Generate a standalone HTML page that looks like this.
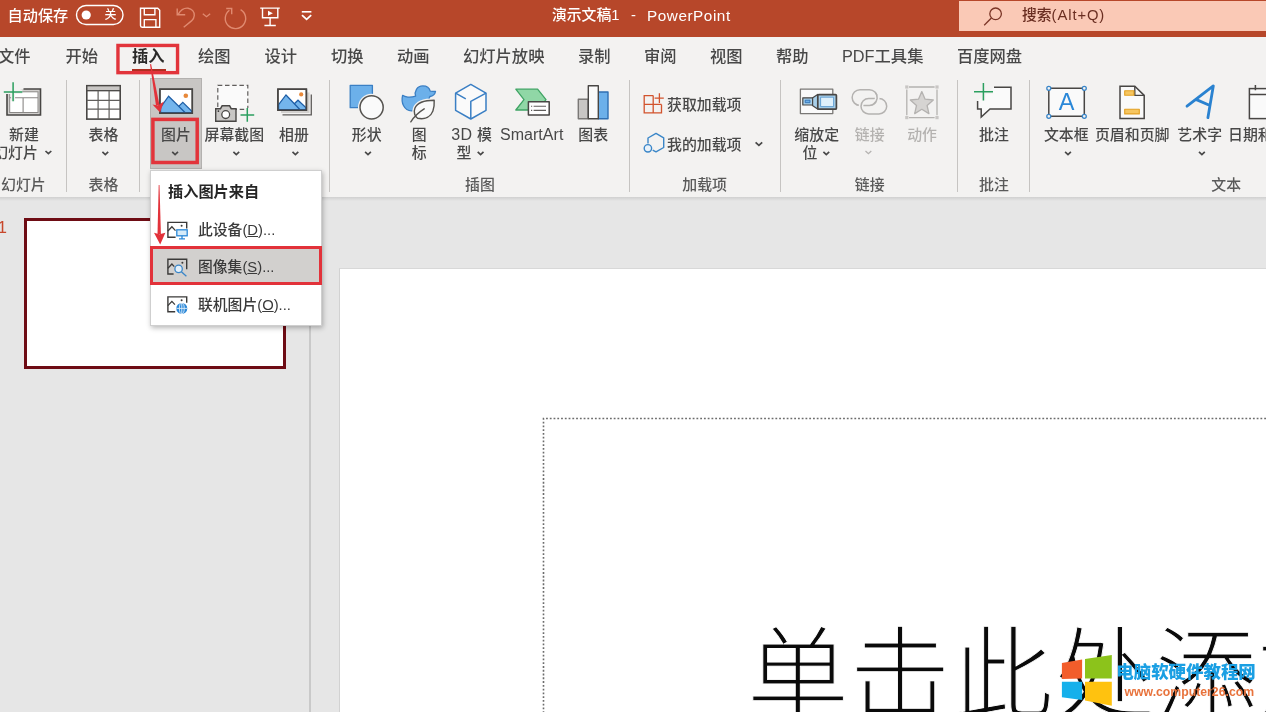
<!DOCTYPE html>
<html lang="zh-CN">
<head>
<meta charset="utf-8">
<title>演示文稿1 - PowerPoint</title>
<style>
*{box-sizing:border-box;margin:0;padding:0}
html,body{width:1266px;height:712px;overflow:hidden;background:#e6e6e6}
body{font-family:"Liberation Sans","Noto Sans CJK SC",sans-serif;color:#444;position:relative;font-size:14.8px;filter:blur(.6px)}
svg{position:absolute;left:0;top:0;overflow:visible}
#title{z-index:2;position:absolute;left:0;top:0;width:1266px;height:36.7px;background:#b7472a;color:#fff}
#title .t{position:absolute;top:5.4px;font-size:14.8px;font-weight:500;line-height:21px;white-space:nowrap}
#search{position:absolute;left:958.5px;top:1px;width:308px;height:30.2px;background:#fac9b6}
#search span{font-weight:500;position:absolute;left:63.5px;top:4.3px;font-size:14.8px;line-height:21px;color:#6a2e21;white-space:nowrap}
#tabs{position:absolute;left:0;top:36px;width:1266px;height:40px;background:#f3f2f1}
#tabs span{position:absolute;top:7.6px;font-size:16.3px;font-weight:500;line-height:24px;color:#484848;white-space:nowrap}
#ribbon{position:absolute;left:0;top:76px;width:1266px;height:121px;background:#f3f2f1}
.sep{position:absolute;top:80.3px;width:1.4px;height:111.5px;background:#c6c4c2}
.lb{position:absolute;transform:translateX(-50%);font-size:14.9px;font-weight:500;line-height:18px;color:#484848;white-space:nowrap;text-align:center}
.ll{position:absolute;font-size:14.9px;font-weight:500;line-height:18px;color:#484848;white-space:nowrap}
.g{color:#5a5a5a}
.dis{color:#b4b2b0}
#pressed{position:absolute;left:150px;top:78px;width:52px;height:91px;background:#c8c6c4;border:1px solid #b3b1af}
#shadow{position:absolute;left:0;top:197px;width:1266px;height:4px;background:linear-gradient(#d0d0d0,#e6e6e6)}
#splitl{position:absolute;left:309px;top:200px;width:1.5px;height:512px;background:#c9c9c9}
#slide{position:absolute;left:338.5px;top:268px;width:927px;height:444px;background:#fff;border-left:1px solid #d2d2d2;border-top:1px solid #d8d8d8}
#num{position:absolute;left:-2.5px;top:217.5px;font-size:17px;line-height:20px;color:#c8472b}
#thumb{position:absolute;left:24px;top:218px;width:261.5px;height:151px;background:#fff;border:3.8px solid #6e0c14}
#big{position:absolute;left:747px;top:607.3px;font-size:102px;line-height:140px;font-weight:300;color:#0a0a0a;white-space:nowrap;-webkit-text-stroke:.9px #fff}
#menu{position:absolute;left:150px;top:170px;width:172px;height:155.5px;background:#fff;border:1px solid #cfcfcf;box-shadow:1px 2px 5px rgba(0,0,0,.28)}
#menu .h{position:absolute;left:17px;top:11px;font-size:15.2px;font-weight:700;color:#262626;white-space:nowrap;line-height:20px}
#menu .i{position:absolute;left:47px;font-size:14.8px;font-weight:500;color:#3a3a3a;white-space:nowrap;line-height:20px}
#hl{position:absolute;left:150px;top:246px;width:172px;height:39px;background:#d2d0ce;border:3.5px solid #e2323a}
.wm1{position:absolute;left:1116.3px;top:659px;font-size:17.45px;line-height:26px;font-weight:900;color:#1a9fe3;white-space:nowrap;letter-spacing:0}
.wm2{position:absolute;left:1124.5px;top:681.8px;font-size:12.25px;line-height:20px;font-weight:700;color:#e8733c;white-space:nowrap}
</style>
</head>
<body>
<div id="title">
  <span class="t" style="left:7.500px;font-weight:500;font-size:15.2px">自动保存</span>
  <span class="t" style="left:104.5px;font-size:12px">关</span>
  <span class="t" style="left:552px">演示文稿1</span>
  <span class="t" style="left:631px">-</span>
  <span class="t" style="left:647px;letter-spacing:.55px;font-size:15.300px">PowerPoint</span>
  <div id="search"><span>搜索<i style="font-style:normal;letter-spacing:.9px">(Alt+Q)</i></span></div>
  <svg width="1266" height="36" viewBox="0 0 1266 36" fill="none" stroke="#fff" stroke-width="1.4">
    <!-- toggle -->
    <rect x="76.5" y="5.5" width="46.5" height="19" rx="9.5"/>
    <circle cx="86.2" cy="15" r="4.6" fill="#fff" stroke="none"/>
    <!-- save -->
    <path d="M140.5 8.2h17.2l2 2v17h-17.6a1.6 1.6 0 0 1-1.6-1.6z"/>
    <path d="M144.3 8.2v6.6h10.6V8.2M144.3 27.2v-7.6h11.6v7.6" />
    <!-- undo (faded) -->
    <g stroke="#e08a70">
      <path d="M177.200 8.400v6.400h8"/>
      <path d="M178.300 14.200c2.400-4.200 6.200-6.400 9.800-6c3.800.5 6.400 3.600 6.200 7.300c-.1 2.200-1.200 3.900-2.800 5.400l-7.800 6.300"/>
      <path d="M202.800 13.700l3.700 3 3.700-3" stroke-width="1.300"/>
      <path d="M240.600 9.600a10.200 10.200 0 1 1-11.200.6"/>
      <path d="M226.200 8.500h5.500v5.700"/>
    </g>
    <!-- present -->
    <path d="M260.200 8.100h19.600M262.500 8.100v9.600h15.300V8.100M270.100 17.700v7.500M264.400 25.500h11.400"/>
    <path d="M268 10.800l4.900 2.500-4.900 2.500z" fill="#fff" stroke="none"/>
    <!-- customize -->
    <path d="M301.800 11.800h9.600" stroke-width="1.6"/>
    <path d="M302 15.200l4.600 4.200 4.600-4.200" stroke-width="1.8"/>
    <!-- search icon -->
    <g stroke="#7a3526" stroke-width="1.300">
      <circle cx="995.600" cy="13.800" r="5.800"/>
      <path d="M991.400 18l-7.200 7.200"/>
    </g>
  </svg>
</div>
<div id="tabs">
  <span style="left:-2px">文件</span>
  <span style="left:65.500px">开始</span>
  <span style="left:132px;color:#2b2a29;font-weight:700">插入</span>
  <span style="left:198px">绘图</span>
  <span style="left:264.500px">设计</span>
  <span style="left:331px">切换</span>
  <span style="left:397px">动画</span>
  <span style="left:463px">幻灯片放映</span>
  <span style="left:578px">录制</span>
  <span style="left:644px">审阅</span>
  <span style="left:710px">视图</span>
  <span style="left:776px">帮助</span>
  <span style="left:842px">PDF工具集</span>
  <span style="left:957px">百度网盘</span>
  <div style="position:absolute;left:132.400px;top:32.500px;width:33.400px;height:3px;background:#ad2f21"></div>
</div>
<div id="ribbon"></div>
<div id="pressed"></div>
<div class="sep" style="left:66px"></div>
<div class="sep" style="left:138.500px"></div>
<div class="sep" style="left:329px"></div>
<div class="sep" style="left:628.500px"></div>
<div class="sep" style="left:779.700px"></div>
<div class="sep" style="left:956.500px"></div>
<div class="sep" style="left:1029px"></div>

<!-- labels -->
<div class="lb" style="left:24px;top:126px">新建</div>
<div class="ll" style="left:-6.800px;top:144px">幻灯片</div>
<div class="lb g" style="left:23.400px;top:176px">幻灯片</div>
<div class="lb" style="left:103.400px;top:126px">表格</div>
<div class="lb g" style="left:103.400px;top:176px">表格</div>
<div class="lb" style="left:176px;top:126px">图片</div>
<div class="lb" style="left:234.300px;top:126px">屏幕截图</div>
<div class="lb" style="left:294px;top:126px">相册</div>
<div class="lb" style="left:366.700px;top:126px">形状</div>
<div class="lb" style="left:419.300px;top:126px">图<br>标</div>
<div class="lb" style="left:471.600px;top:126px;letter-spacing:0"><i style="font-style:normal;font-size:16px;letter-spacing:.3px">3D </i>模</div>
<div class="ll" style="left:456.500px;top:144px">型</div>
<div class="lb" style="left:531.700px;top:126px;font-size:16px;letter-spacing:.05px">SmartArt</div>
<div class="lb" style="left:593.200px;top:126px">图表</div>
<div class="lb g" style="left:480px;top:176px">插图</div>
<div class="ll" style="left:667px;top:95.800px">获取加载项</div>
<div class="ll" style="left:667px;top:135.600px">我的加载项</div>
<div class="lb g" style="left:704.600px;top:176px">加载项</div>
<div class="lb" style="left:816.700px;top:126px">缩放定</div>
<div class="ll" style="left:802.500px;top:144px">位</div>
<div class="lb dis" style="left:869.700px;top:126px">链接</div>
<div class="lb dis" style="left:922.100px;top:126px">动作</div>
<div class="lb g" style="left:869.700px;top:176px">链接</div>
<div class="lb" style="left:994px;top:126px">批注</div>
<div class="lb g" style="left:994px;top:176px">批注</div>
<div class="lb" style="left:1066.300px;top:126px">文本框</div>
<div class="lb" style="left:1132.200px;top:126px">页眉和页脚</div>
<div class="lb" style="left:1199.700px;top:126px">艺术字</div>
<div class="ll" style="left:1228px;top:126px">日期和时间</div>
<div class="lb g" style="left:1226.200px;top:176px">文本</div>

<svg width="1266" height="200" viewBox="0 0 1266 200" fill="none" stroke-linejoin="miter">
  <!-- chevrons -->
  <g stroke="#484848" stroke-width="1.700">
    <path d="M45.500 151l2.900 2.700 2.900-2.700"/>
    <path d="M102.400 151.800l2.900 2.700 2.900-2.700"/>
    <path d="M172.200 151.800l2.900 2.700 2.900-2.700"/>
    <path d="M233.400 151.800l2.900 2.700 2.900-2.700"/>
    <path d="M292.500 151.800l2.900 2.700 2.900-2.700"/>
    <path d="M365.100 151.800l2.900 2.700 2.900-2.700"/>
    <path d="M477.700 151.800l2.900 2.700 2.900-2.700"/>
    <path d="M755.600 142.300l3.300 3.100 3.300-3.100"/>
    <path d="M823.400 151.800l2.900 2.700 2.900-2.700"/>
    <path d="M1065.100 151.800l2.900 2.700 2.900-2.700"/>
    <path d="M1199 151.800l2.900 2.700 2.900-2.700"/>
  </g>
  <path d="M865.500 151l2.900 2.700 2.900-2.700" stroke="#b4b2b0" stroke-width="1.3"/>

  <!-- new slide -->
  <g>
    <path d="M23.500 89h17v26H7V93.500" stroke="#484644" stroke-width="1.6" fill="#d2d0ce"/>
    <rect x="9.700" y="91.800" width="28.300" height="20.700" fill="#fff" stroke="#8a8886" stroke-width="1"/>
    <path d="M9.700 97.700h28.300M23.100 97.700v14.800" stroke="#8a8886" stroke-width="1.1"/>
    <path d="M13.100 82.300v19M3.800 91.900h18.500" stroke="#f3f2f1" stroke-width="4"/>
    <path d="M13.100 82.300v19M3.800 91.900h18.500" stroke="#2b9f5f" stroke-width="1.5"/>
  </g>
  <!-- table -->
  <g stroke="#484644">
    <rect x="86.800" y="85.700" width="33.400" height="33.400" fill="#fff" stroke-width="1.6"/>
    <rect x="86.800" y="85.700" width="33.400" height="5" fill="#c8c6c4" stroke-width="1.3"/>
    <path d="M98.100 90.700v28.400M109.100 90.700v28.400M86.800 100.300h33.400M86.800 109.200h33.400" stroke-width="1.2" stroke="#605e5c"/>
  </g>
  <!-- picture -->
  <g>
    <rect x="159.900" y="89.200" width="32.400" height="24" fill="#fff" stroke="#484644" stroke-width="1.5"/>
    <path d="M176 109l6.800-6.600 8.800 8.600v1.500h-12z" fill="#74b5ec" stroke="#1e5ea6" stroke-width="1.2"/>
    <path d="M160.600 107.400l8-11.200 16.400 16.300h-24.400z" fill="#74b5ec" stroke="#1e5ea6" stroke-width="1.2"/>
    <circle cx="185.800" cy="95.800" r="2.300" fill="#e8893a"/>
    <rect x="159.900" y="89.200" width="32.400" height="24" stroke="#484644" stroke-width="1.500"/>
  </g>
  <!-- screenshot -->
  <g>
    <rect x="217.800" y="85.300" width="30" height="24" fill="#fafafa" stroke="#605e5c" stroke-width="1.2" stroke-dasharray="4.500 2.700"/>
    <path d="M215.700 108.700h4.800l1.600-2.900h7.500l1.600 2.900h4.800v12.500h-20.300z" fill="#c8c6c4" stroke="#484644" stroke-width="1.400"/>
    <circle cx="225.700" cy="114.600" r="3.900" fill="#fff" stroke="#484644" stroke-width="1.300"/>
    <circle cx="218.400" cy="111.100" r=".9" fill="#323130"/>
    <path d="M247.300 108v13.800M240.500 114.900h13.700" stroke="#f3f2f1" stroke-width="4"/>
    <path d="M247.300 108v13.800M240.500 114.900h13.700" stroke="#2b9f5f" stroke-width="1.500"/>
  </g>
  <!-- album -->
  <g>
    <path d="M282.500 114.800h28.800V94.500" stroke="#605e5c" stroke-width="1.300" fill="none"/>
    <rect x="281" y="92.500" width="28.500" height="20.500" fill="#d2d0ce" stroke="none"/>
    <rect x="277.900" y="89.200" width="28.500" height="21" fill="#fff" stroke="#484644" stroke-width="1.500"/>
    <path d="M292 106l6-5.800 7.800 7.400v2h-10z" fill="#74b5ec" stroke="#1e5ea6" stroke-width="1.200"/>
    <path d="M278.600 104.600l7.400-9.600 13.800 14.500h-21.200z" fill="#74b5ec" stroke="#1e5ea6" stroke-width="1.200"/>
    <circle cx="301.200" cy="94.400" r="2.100" fill="#e8893a"/>
    <rect x="277.900" y="89.200" width="28.500" height="21" stroke="#484644" stroke-width="1.500"/>
  </g>
</svg>
<svg width="1266" height="200" viewBox="0 0 1266 200" fill="none" stroke-linejoin="round">
  <!-- shapes -->
  <g>
    <rect x="350.200" y="85.300" width="22.200" height="22.400" fill="#6cb0ea" stroke="#3a7fc4" stroke-width="1.300"/>
    <circle cx="371.600" cy="107.300" r="13.600" fill="#f3f2f1"/>
    <circle cx="371.600" cy="107.300" r="11.600" fill="#fafafa" stroke="#55534f" stroke-width="1.500"/>
  </g>
  <!-- icons: duck + leaf -->
  <g>
    <path d="M402.600 95.300c2.200 1.800 7.600 2.600 13 .8c-1.500-4.500 1.400-10.200 7.200-10.200c4.200 0 6.800 2.700 7.400 5.300l5.300.3c-.6 3.200-3 4.700-5.600 5c-.5 2.300-1.600 3.800-3 4.800c3 3.500 1.200 9.600-5.400 9.600h-10c-7.400-.4-10.700-8.200-8.900-15.600z" fill="#6cb0ea" stroke="#3a7fc4" stroke-width="1.300"/>
    <path d="M434.200 100.300c-9-0-16.500 1.300-19.300 8c-1.700 4.200.200 8.200 2.700 10c7.800 1.600 13.200-1.600 15.300-7.200c1.200-3.300 1.500-7 1.300-10.800z" fill="#f3f2f1" stroke="#f3f2f1" stroke-width="4"/>
    <path d="M434.200 100.300c-9-0-16.500 1.300-19.300 8c-1.700 4.200.200 8.200 2.700 10c7.800 1.600 13.200-1.600 15.300-7.200c1.200-3.300 1.500-7 1.300-10.800z" fill="#fafafa" stroke="#55534f" stroke-width="1.400"/>
    <path d="M410.800 121.800c3.300-5.200 7.500-9.400 13.400-13" stroke="#55534f" stroke-width="1.400" stroke-linecap="round"/>
  </g>
  <!-- 3D -->
  <g stroke="#3a7fc4" stroke-width="1.500">
    <path d="M470.800 84.400l15.200 8.700v17.200l-15.200 8.700-15.200-8.700V93.100z" fill="#fafafa"/>
    <path d="M470.800 119v-17.600l15.200-8.300M455.600 93.100l10.200 5.700"/>
  </g>
  <!-- smartart -->
  <g>
    <path d="M515.800 89.200h21.800l8.400 10.400-8.400 10.400h-21.800l8.200-10.400z" fill="#90d7a6" stroke="#3fa464" stroke-width="1.300"/>
    <rect x="528.400" y="101.800" width="20.800" height="13.200" fill="#fff" stroke="#484644" stroke-width="1.500"/>
    <path d="M533.600 106.300h12.400M533.600 110.400h12.400" stroke="#605e5c" stroke-width="1.100"/>
    <path d="M531 106.300h1.200M531 110.400h1.200" stroke="#605e5c" stroke-width="1.100"/>
  </g>
  <!-- chart -->
  <g stroke-width="1.400">
    <rect x="578.300" y="99.200" width="9.800" height="19.500" fill="#c8c6c4" stroke="#7a7876"/>
    <rect x="598.300" y="92" width="9.700" height="26.700" fill="#6cb0ea" stroke="#2f6fb2"/>
    <rect x="588.300" y="85.700" width="10" height="33" fill="#fafafa" stroke="#484644"/>
  </g>
  <!-- get addins -->
  <g stroke="#d2532d" stroke-width="1.300" stroke-linejoin="miter">
    <path d="M653.200 95.600h-9v17.300h17.300v-8.400M644.200 104.400h17.300M653.200 95.600v17.300"/>
    <path d="M659.400 93.300v9.600M654.600 98.100h9.200"/>
  </g>
  <!-- my addins -->
  <g stroke="#3a86c8" stroke-width="1.400">
    <path d="M648 143.400v-5.400l8-4.600 7.700 4.500v9.600l-7.700 4.400-3.300-1.800"/>
    <circle cx="647.900" cy="148.300" r="3.700" fill="#e9f2fa"/>
  </g>
  <!-- zoom -->
  <g>
    <rect x="800.400" y="89.200" width="32.400" height="24.400" fill="#fafafa" stroke="#7a7876" stroke-width="1.300"/>
    <path d="M812.400 98l5.200-3.600v14.700l-5.200-3.700z" fill="#a8cfe9" stroke="#484644" stroke-width="1.200"/>
    <rect x="802.800" y="97.800" width="9.800" height="7.200" fill="#a8cfe9" stroke="#484644" stroke-width="1.200"/>
    <rect x="805.200" y="100.200" width="4.800" height="2.500" fill="#6cb0ea" stroke="#2f6fb2" stroke-width=".9"/>
    <rect x="817.800" y="94.600" width="18.600" height="14.600" rx="1" fill="#a8cfe9" stroke="#484644" stroke-width="1.700"/>
    <rect x="820.600" y="97.200" width="13" height="9.400" fill="#dff0fb" stroke="#5a9ad0" stroke-width=".9"/>
  </g>
  <!-- link (disabled) -->
  <g stroke="#b4b2b0" stroke-width="1.500" fill="none">
    <path d="M860 89.700H869.400A7.850 7.850 0 0 1 869.400 105.400H860A7.850 7.850 0 0 1 860 89.700Z"/>
    <path d="M861.720 102.950A7.700 7.700 0 0 0 861.720 109.450" stroke="#f3f2f1" stroke-width="4.500"/>
    <path d="M868.700 98.500H879A7.700 7.700 0 0 1 879 113.900H868.700A7.700 7.700 0 0 1 868.700 98.500Z"/>
    <path d="M876.900 95.150A7.850 7.850 0 0 1 875.980 101.730" stroke="#f3f2f1" stroke-width="4.500"/>
    <path d="M875.200 92.200A7.850 7.850 0 0 1 873.800 103.900"/>
  </g>
  <!-- action (disabled) -->
  <g stroke="#b4b2b0" stroke-width="1.300">
    <path d="M909 87h25.600M909 117.600h25.600M906.800 89.400v25.800M937 89.400v25.800"/>
    <g fill="#c8c6c4" stroke="none">
      <rect x="905.200" y="85.400" width="3.200" height="3.200"/><rect x="935.400" y="85.400" width="3.200" height="3.200"/>
      <rect x="905.200" y="116" width="3.200" height="3.200"/><rect x="935.400" y="116" width="3.200" height="3.200"/>
    </g>
    <path d="M921.800 91.600l3.300 7.600 8.200.8-6.200 5.500 1.800 8.100-7.100-4.300-7.100 4.300 1.800-8.100-6.200-5.500 8.200-.8z" fill="#d6d4d2"/>
  </g>
  <!-- comment -->
  <g>
    <path d="M994 87.200h17v21.800h-21l-8.800 8v-8h-3.600V101" fill="#fafafa" stroke="#484644" stroke-width="1.500" stroke-linejoin="miter"/>
    <path d="M983.400 83v17.600M974 91.800h19" stroke="#f3f2f1" stroke-width="4"/>
    <path d="M983.400 83v17.600M974 91.800h19" stroke="#2b9f5f" stroke-width="1.500"/>
  </g>
  <!-- textbox -->
  <g>
    <rect x="1048.800" y="88.300" width="35.500" height="28" fill="#fafafa" stroke="#484644" stroke-width="1.500"/>
    <g fill="#f3f2f1" stroke="#3a86c8" stroke-width="1.300">
      <circle cx="1048.800" cy="88.300" r="2"/><circle cx="1084.300" cy="88.300" r="2"/>
      <circle cx="1048.800" cy="116.300" r="2"/><circle cx="1084.300" cy="116.300" r="2"/>
    </g>
    <text x="1066.500" y="110.400" text-anchor="middle" font-family="Liberation Sans, sans-serif" font-size="23.500" fill="#2b88d8" stroke="none">A</text>
  </g>
  <!-- header/footer -->
  <g>
    <path d="M1120 86.200h14.800l9.400 9.200v23.200H1120z" fill="#fafafa" stroke="#484644" stroke-width="1.500" stroke-linejoin="miter"/>
    <path d="M1134.800 86.200v9.200h9.400" stroke="#484644" stroke-width="1.400"/>
    <rect x="1124.700" y="90.800" width="9.200" height="4.400" fill="#f6c661" stroke="#e3a021" stroke-width="1.100"/>
    <rect x="1124.700" y="109.300" width="14.600" height="4.600" fill="#f6c661" stroke="#e3a021" stroke-width="1.100"/>
  </g>
  <!-- wordart -->
  <g stroke="#2a82d0" stroke-width="2.800" stroke-linecap="round">
    <path d="M1187 106.200l26.300-20.300-5.400 31.800M1196.400 99.600l13 5.600"/>
  </g>
  <!-- date -->
  <g stroke="#484644" stroke-width="1.500" stroke-linejoin="miter">
    <rect x="1249.400" y="88.600" width="30" height="30" fill="#fafafa"/>
    <path d="M1249.400 94.400h30M1255.400 85v5.200"/>
  </g>
</svg>
<div id="shadow"></div>
<div id="splitl"></div>
<div id="slide"></div>
<div id="num">1</div>
<div id="thumb"></div>
<svg width="1266" height="712" viewBox="0 0 1266 712" fill="none"><path d="M1266 418.500H543.500V712" stroke="#6c6c6c" stroke-width="1.600" stroke-dasharray="1.800 1.960"/></svg>
<div id="big">单击此处添加</div>
<div id="menu">
  <span class="h">插入图片来自</span>
  <span class="i" style="top:49.200px">此设备(<u>D</u>)...</span>
  <span class="i" style="top:124.200px">联机图片(<u>O</u>)...</span>
</div>
<div id="hl"></div>
<div class="ll" style="left:198px;top:256.800px;color:#3a3a3a;line-height:20px;font-size:14.8px">图像集(<u>S</u>)...</div>
<svg width="1266" height="712" viewBox="0 0 1266 712" fill="none" stroke-linejoin="miter">
  <!-- item1: this device -->
  <g stroke="#3b3a39" stroke-width="1.400">
    <path d="M175.600 237.200h-7.700v-14.800h18.800v6.200"/>
    <path d="M167.900 231l4-4.200 3.600 3.800" stroke-width="1.300"/>
    <circle cx="181.600" cy="225.800" r="1" fill="#3b3a39" stroke="none"/>
  </g>
  <g stroke="#2b88d8" stroke-width="1.300">
    <rect x="176.800" y="229.800" width="10.400" height="6" fill="#d6ebf9"/>
    <path d="M182 235.800v2.600M179 238.800h6"/>
  </g>
  <!-- item2: stock images -->
  <g stroke="#3b3a39" stroke-width="1.400">
    <path d="M173.600 274h-5.700v-14.700h18.800v10"/>
    <path d="M167.900 268.200l4-4.200 2.400 2.600" stroke-width="1.300"/>
    <circle cx="182.400" cy="262.700" r="1" fill="#3b3a39" stroke="none"/>
  </g>
  <g stroke="#3a86c8" stroke-width="1.300">
    <circle cx="178.600" cy="268.900" r="3.700" fill="#e4f0fa"/>
    <path d="M181.400 271.700l5 4.600"/>
  </g>
  <!-- item3: online pictures -->
  <g stroke="#3b3a39" stroke-width="1.400">
    <path d="M175.200 311.700h-7.300v-14.800h18.800v5.800"/>
    <path d="M167.900 305.600l4-4.200 3 3.200" stroke-width="1.300"/>
    <circle cx="181.600" cy="300.300" r="1" fill="#3b3a39" stroke="none"/>
  </g>
  <circle cx="181.800" cy="308.400" r="5.500" fill="#2b88d8"/>
  <g stroke="#fff" stroke-width=".9" opacity=".85">
    <path d="M176.500 308.400h10.600M181.800 303.100v10.600"/>
    <ellipse cx="181.800" cy="308.400" rx="2.400" ry="5.300"/>
  </g>
</svg>
<svg width="1266" height="712" viewBox="0 0 1266 712" fill="none">
  <rect x="117.950" y="45.450" width="59.600" height="27.200" stroke="#e2343b" stroke-width="3.400"/>
  <rect x="152.900" y="119.400" width="44.300" height="43.100" stroke="#e2343b" stroke-width="3.500"/>
  <!-- arrow 1: from tab to picture icon -->
  <path d="M150 64.200l1.100-.200 8.300 40.800-3.400 1z" fill="#e2323a"/>
  <path d="M152.500 104.600l5.300 1 6.100-4.200-3.800 11.200z" fill="#e2323a"/>
  <!-- arrow 2: menu -->
  <path d="M158.700 185l.800 0 1.400 49h-3.400z" fill="#e2323a"/>
  <path d="M154 232.800l5.400 1.400 6-1.400-5.200 11.800z" fill="#e2323a"/>
  <!-- windows logo -->
  <path d="M1061.900 663l20.200-3.400v18.800l-20.200.5z" fill="#f25d2b"/>
  <path d="M1085 659.100l26.800-4.100v23.400H1085z" fill="#8cc31b"/>
  <path d="M1061.900 681.800h20.200v18.300l-20.200-2.900z" fill="#15b0eb"/>
  <path d="M1085 681.800h26.800v23.900l-26.800-5.100z" fill="#ffc20f"/>
</svg>
<div class="wm1">电脑软硬件教程网</div>
<div class="wm2">www.computer26.com</div>
</body>
</html>
